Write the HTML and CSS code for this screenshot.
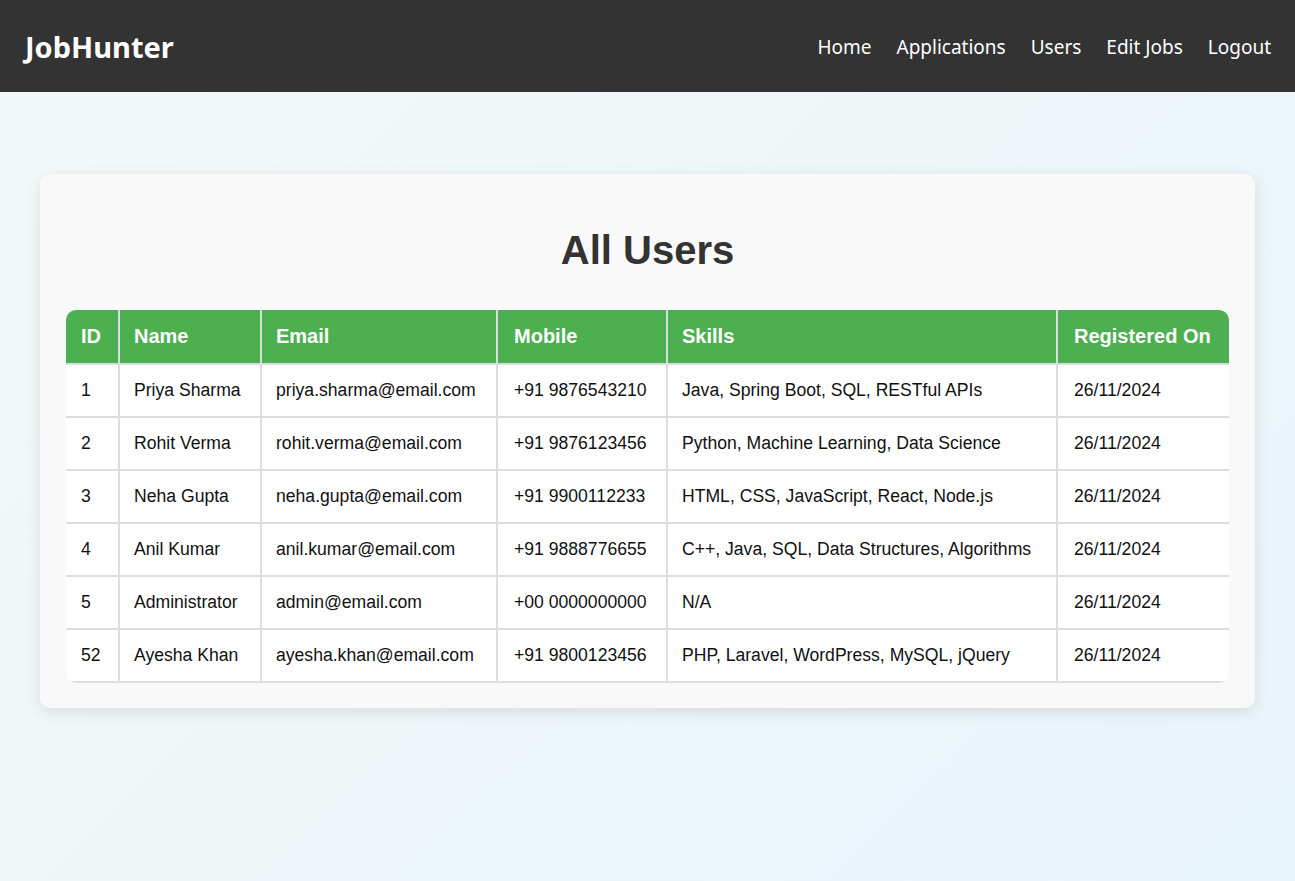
FILE: index.html
```html
<!DOCTYPE html>
<html lang="en">
<head>
<meta charset="utf-8">
<title>JobHunter - All Users</title>
<link rel="stylesheet" href="styles.css">
</head>
<body>
<header class="navbar">
  <div class="logo">JobHunter</div>
  <nav class="nav-links">
    <a href="#">Home</a>
    <a href="#">Applications</a>
    <a href="#">Users</a>
    <a href="#">Edit Jobs</a>
    <a href="#">Logout</a>
  </nav>
</header>
<main class="card">
  <h1 class="title">All Users</h1>
  <div class="table-wrap">
    <table class="users">
      <thead>
        <tr>
          <th class="c-id">ID</th>
          <th class="c-name">Name</th>
          <th class="c-email">Email</th>
          <th class="c-mobile">Mobile</th>
          <th class="c-skills">Skills</th>
          <th class="c-date">Registered On</th>
        </tr>
      </thead>
      <tbody>
        <tr><td>1</td><td>Priya Sharma</td><td>priya.sharma@email.com</td><td>+91 9876543210</td><td>Java, Spring Boot, SQL, RESTful APIs</td><td>26/11/2024</td></tr>
        <tr><td>2</td><td>Rohit Verma</td><td>rohit.verma@email.com</td><td>+91 9876123456</td><td>Python, Machine Learning, Data Science</td><td>26/11/2024</td></tr>
        <tr><td>3</td><td>Neha Gupta</td><td>neha.gupta@email.com</td><td>+91 9900112233</td><td>HTML, CSS, JavaScript, React, Node.js</td><td>26/11/2024</td></tr>
        <tr><td>4</td><td>Anil Kumar</td><td>anil.kumar@email.com</td><td>+91 9888776655</td><td>C++, Java, SQL, Data Structures, Algorithms</td><td>26/11/2024</td></tr>
        <tr><td>5</td><td>Administrator</td><td>admin@email.com</td><td>+00 0000000000</td><td>N/A</td><td>26/11/2024</td></tr>
        <tr><td>52</td><td>Ayesha Khan</td><td>ayesha.khan@email.com</td><td>+91 9800123456</td><td>PHP, Laravel, WordPress, MySQL, jQuery</td><td>26/11/2024</td></tr>
      </tbody>
    </table>
  </div>
</main>
</body>
</html>
```

FILE: styles.css
```css
html, body {
  margin: 0;
  padding: 0;
}
body {
  min-height: 881px;
  background: linear-gradient(135deg, #f4f9f8 0%, #eef6f8 50%, #e8f4fc 100%);
  font-family: "Liberation Sans", Arial, sans-serif;
  color: #333;
}
.navbar {
  height: 92px;
  box-sizing: border-box;
  background: #333333;
  display: flex;
  align-items: center;
  justify-content: space-between;
  padding: 0 24px 0 25px;
}
.logo {
  font-family: "Noto Sans", "Open Sans", sans-serif;
  font-weight: 700;
  font-size: 29px;
  color: #fff;
}
.nav-links {
  display: flex;
  gap: 25px;
  padding-top: 2px;
}
.nav-links a {
  font-family: "Noto Sans", "Open Sans", sans-serif;
  font-size: 19px;
  color: #fff;
  text-decoration: none;
}
.card {
  margin: 82px 40px 0;
  padding: 26px 26px 25px;
  background: #f9f9f9;
  border-radius: 10px;
  box-shadow: 0 4px 16px rgba(0, 0, 0, 0.1);
}
.title {
  margin: 27px 0 37px;
  text-align: center;
  font-size: 40px;
  font-weight: 700;
  color: #333;
  line-height: 46px;
}
.table-wrap {
  border-radius: 10px;
  overflow: hidden;
}
.users {
  width: 100%;
  border-collapse: collapse;
  table-layout: fixed;
  background: #fff;
}
.users th, .users td {
  box-sizing: border-box;
  border: 2px solid #ddd;
  padding: 15px 15px 15px 14px;
  text-align: left;
  white-space: nowrap;
}
.users th {
  background: #4caf50;
  color: #fff;
  font-size: 20px;
  font-weight: 700;
  line-height: 23px;
  border-top: none;
}
.users th:first-child, .users td:first-child {
  border-left: none;
  padding-left: 15px;
}
.users th:nth-child(4), .users td:nth-child(4),
.users th:nth-child(6), .users td:nth-child(6) {
  padding-left: 16px;
}
.users td {
  font-size: 17.6px;
  line-height: 21px;
  color: #111;
}
.c-id { width: 53px; }
.c-name { width: 142px; }
.c-email { width: 236px; }
.c-mobile { width: 170px; }
.c-skills { width: 390px; }
.c-date { width: 173px; }
```
